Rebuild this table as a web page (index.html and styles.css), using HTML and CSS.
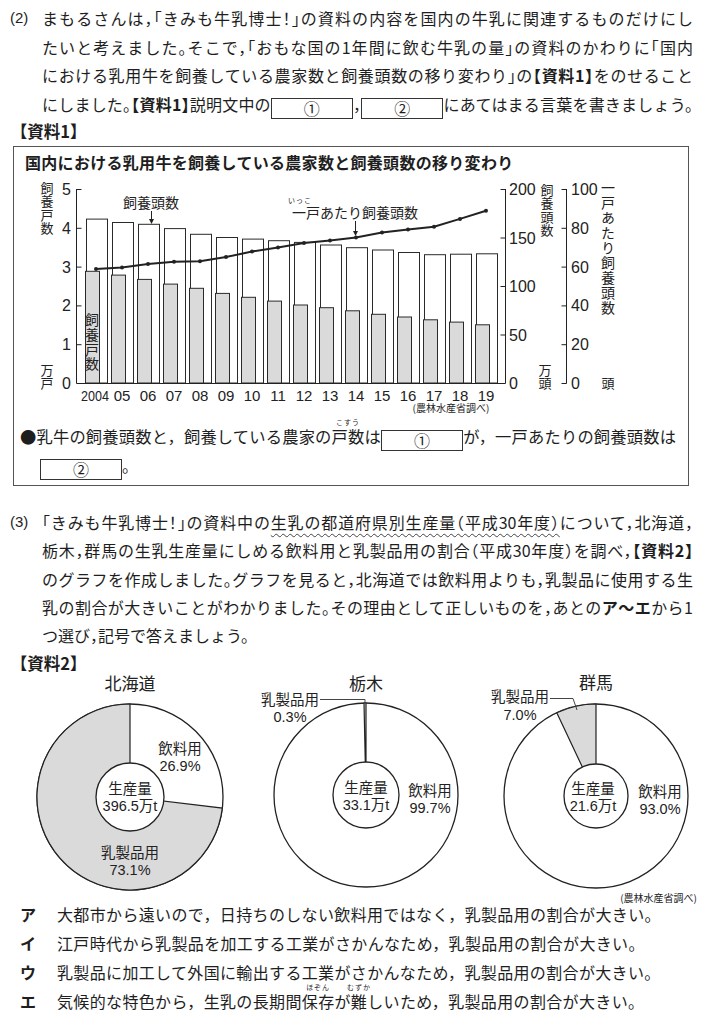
FILE: index.html
```html
<!DOCTYPE html>
<html lang="ja">
<head>
<meta charset="utf-8">
<title>資料</title>
<link rel="stylesheet" href="styles.css">
</head>
<body>
<div class="page">
  <section class="q">
    <div class="qnum">(2)</div>
    <div class="qbody">
      <p class="ln">まもるさんは，「きみも牛乳博士！」の資料の内容を国内の牛乳に関連するものだけにし</p>
      <p class="ln">たいと考えました。そこで，「おもな国の1年間に飲む牛乳の量」の資料のかわりに「国内</p>
      <p class="ln">における乳用牛を飼養している農家数と飼養頭数の移り変わり」の<b>【資料1】</b>をのせること</p>
      <p class="ln">にしました。<b>【資料1】</b>説明文中の<span class="blank">①</span>，<span class="blank">②</span>にあてはまる言葉を書きましょう。</p>
    </div>
  </section>
  <div class="tag">【資料1】</div>

  <div class="chartbox">
    <div class="ctitle">国内における乳用牛を飼養している農家数と飼養頭数の移り変わり</div>
    <svg class="chart" viewBox="14 177 674 244" width="674" height="244">
      <g class="wbar">
        <rect x="86.5" y="219.1" width="21" height="163.9"/>
        <rect x="112.5" y="222.5" width="21" height="160.5"/>
        <rect x="138.5" y="224.3" width="21" height="158.7"/>
        <rect x="164.5" y="228.6" width="21" height="154.4"/>
        <rect x="190.5" y="234.3" width="21" height="148.7"/>
        <rect x="216.5" y="237.5" width="21" height="145.5"/>
        <rect x="242.5" y="239.1" width="21" height="143.9"/>
        <rect x="268.5" y="240.7" width="21" height="142.3"/>
        <rect x="294.5" y="242.4" width="21" height="140.6"/>
        <rect x="320.5" y="245.0" width="21" height="138.0"/>
        <rect x="346.5" y="247.7" width="21" height="135.3"/>
        <rect x="372.5" y="250.0" width="21" height="133.0"/>
        <rect x="398.5" y="252.5" width="21" height="130.5"/>
        <rect x="424.5" y="254.7" width="21" height="128.3"/>
        <rect x="450.5" y="254.2" width="21" height="128.8"/>
        <rect x="476.5" y="253.8" width="21" height="129.2"/>
      </g>
      <g class="gbar">
        <rect x="85.5" y="271.3" width="14" height="111.7"/>
        <rect x="111.5" y="275.1" width="14" height="107.9"/>
        <rect x="137.5" y="279.4" width="14" height="103.6"/>
        <rect x="163.5" y="284.1" width="14" height="98.9"/>
        <rect x="189.5" y="288.3" width="14" height="94.7"/>
        <rect x="215.5" y="293.4" width="14" height="89.6"/>
        <rect x="241.5" y="297.3" width="14" height="85.7"/>
        <rect x="267.5" y="301.1" width="14" height="81.9"/>
        <rect x="293.5" y="305.0" width="14" height="78.0"/>
        <rect x="319.5" y="307.7" width="14" height="75.3"/>
        <rect x="345.5" y="310.8" width="14" height="72.2"/>
        <rect x="371.5" y="314.3" width="14" height="68.7"/>
        <rect x="397.5" y="317.0" width="14" height="66.0"/>
        <rect x="423.5" y="319.8" width="14" height="63.2"/>
        <rect x="449.5" y="322.1" width="14" height="60.9"/>
        <rect x="475.5" y="324.8" width="14" height="58.2"/>
      </g>
      <polyline class="trend" points="96,269.1 122,267.6 148,264.1 174,261.8 200,261.2 226,257.1 252,251.5 278,247.4 304,243.1 330,240.6 356,237.5 382,232.6 408,229.5 434,226.8 460,218.9 486,210.7"/>
      <g class="dots">
        <circle cx="96" cy="269.1" r="2"/><circle cx="122" cy="267.6" r="2"/><circle cx="148" cy="264.1" r="2"/><circle cx="174" cy="261.8" r="2"/>
        <circle cx="200" cy="261.2" r="2"/><circle cx="226" cy="257.1" r="2"/><circle cx="252" cy="251.5" r="2"/><circle cx="278" cy="247.4" r="2"/>
        <circle cx="304" cy="243.1" r="2"/><circle cx="330" cy="240.6" r="2"/><circle cx="356" cy="237.5" r="2"/><circle cx="382" cy="232.6" r="2"/>
        <circle cx="408" cy="229.5" r="2"/><circle cx="434" cy="226.8" r="2"/><circle cx="460" cy="218.9" r="2"/><circle cx="486" cy="210.7" r="2"/>
      </g>
      <g class="axis">
        <path d="M76.5 189V383.5H505.5V189"/>
        <path d="M76.5 189.5h5M76.5 228.3h5M76.5 267.1h5M76.5 305.9h5M76.5 344.7h5"/>
        <path d="M500.5 189.5h5M500.5 238h5M500.5 286.5h5M500.5 335h5"/>
        <path d="M566.5 189V383.5"/>
        <path d="M561.5 189.5h5M561.5 228.3h5M561.5 267.1h5M561.5 305.9h5M561.5 344.7h5M561.5 383.5h5"/>
      </g>
      <g class="num end">
        <text x="71" y="195">5</text><text x="71" y="234">4</text><text x="71" y="273">3</text>
        <text x="71" y="311">2</text><text x="71" y="350">1</text><text x="71" y="389">0</text>
      </g>
      <g class="num">
        <text x="509" y="195">200</text><text x="509" y="244">150</text><text x="509" y="292">100</text>
        <text x="509" y="341">50</text><text x="509" y="389">0</text>
        <text x="571" y="195">100</text><text x="571" y="234">80</text><text x="571" y="273">60</text>
        <text x="571" y="311">40</text><text x="571" y="350">20</text><text x="571" y="389">0</text>
      </g>
      <g class="yr">
        <text x="95" y="401" textLength="28" lengthAdjust="spacingAndGlyphs">2004</text>
        <text x="122" y="401">05</text><text x="148" y="401">06</text><text x="174" y="401">07</text>
        <text x="200" y="401">08</text><text x="226" y="401">09</text><text x="252" y="401">10</text>
        <text x="278" y="401">11</text><text x="304" y="401">12</text><text x="330" y="401">13</text>
        <text x="356" y="401">14</text><text x="382" y="401">15</text><text x="408" y="401">16</text>
        <text x="434" y="401">17</text><text x="460" y="401">18</text><text x="486" y="401">19</text>
      </g>
      <text class="vt s13" x="47" y="181.5">飼養戸数</text>
      <text class="vt s13" x="47" y="363.5">万戸</text>
      <text class="vt s13" x="547" y="183.5">飼養頭数</text>
      <text class="vt s13" x="545" y="363.5">万頭</text>
      <text class="vt s14" x="608" y="181">一戸あたり飼養頭数</text>
      <text class="unit" x="608" y="388">頭</text>
      <text class="vt s14b" x="92" y="313">飼養戸数</text>
      <text class="ann" x="151" y="208">飼養頭数</text>
      <path class="arr" d="M151.5 211V221"/>
      <path class="head" d="M149 219h5l-2.5 5z"/>
      <text class="ann2" x="292" y="218">一戸あたり飼養頭数</text>
      <text class="rtx" x="300" y="203">いっこ</text>
      <path class="arr" d="M355.5 221V233"/>
      <path class="head" d="M353 231h5l-2.5 5z"/>
      <text class="src" x="451" y="412">(農林水産省調べ)</text>
    </svg>
    <p class="bl">●乳牛の飼養頭数と，飼養している農家の<span class="rb">戸数<span class="rt">こすう</span></span>は<span class="blank">①</span>が，一戸あたりの飼養頭数は</p>
    <p class="bl2"><span class="blank">②</span>。</p>
  </div>

  <section class="q q3">
    <div class="qnum">(3)</div>
    <div class="qbody">
      <p class="ln">「きみも牛乳博士！」の資料中の<span class="wavy">生乳の都道府県別生産量（平成30年度）</span>について，北海道，</p>
      <p class="ln">栃木，群馬の生乳生産量にしめる飲料用と乳製品用の割合（平成30年度）を調べ，<b>【資料2】</b></p>
      <p class="ln">のグラフを作成しました。グラフを見ると，北海道では飲料用よりも，乳製品に使用する生</p>
      <p class="ln">乳の割合が大きいことがわかりました。その理由として正しいものを，あとの<b>ア～エ</b>から1</p>
      <p class="ln last">つ選び，記号で答えましょう。</p>
    </div>
  </section>
  <div class="tag tag2">【資料2】</div>

  <svg class="pies" viewBox="10 673 683 225" width="683" height="225">
    <text class="pt" x="130" y="688">北海道</text>
    <circle class="ring" cx="130" cy="795" r="93"/>
    <path class="slice" d="M130,795 L222.3,806.1 A93,93 0 1,1 130,702 Z"/>
    <circle class="core" cx="130" cy="795" r="34"/>
    <text class="pl" x="180" y="752">飲料用</text>
    <text class="pl" x="180" y="769">26.9%</text>
    <text class="pl" x="130" y="792">生産量</text>
    <text class="pl" x="130" y="809">396.5万t</text>
    <text class="pl" x="130" y="856">乳製品用</text>
    <text class="pl" x="130" y="873">73.1%</text>

    <text class="pt" x="366" y="688">栃木</text>
    <circle class="ring" cx="366" cy="793" r="92"/>
    <path class="slice" d="M366,793 L364,701 A92,92 0 0,1 366,701 Z"/>
    <circle class="core" cx="366" cy="793" r="33"/>
    <polyline class="lead" points="320,697.5 365,697.5 365,701"/>
    <text class="pl" x="290" y="703">乳製品用</text>
    <text class="pl" x="290" y="720">0.3%</text>
    <text class="pl" x="366" y="791">生産量</text>
    <text class="pl" x="366" y="808">33.1万t</text>
    <text class="pl" x="430" y="794">飲料用</text>
    <text class="pl" x="430" y="811">99.7%</text>

    <text class="pt" x="596" y="687">群馬</text>
    <circle class="ring" cx="596" cy="794" r="92"/>
    <path class="slice" d="M596,794 L556.8,710.8 A92,92 0 0,1 596,702 Z"/>
    <circle class="core" cx="596" cy="794" r="32"/>
    <polyline class="lead" points="550,696.5 573,696.5 577,708"/>
    <text class="pl" x="520" y="700">乳製品用</text>
    <text class="pl" x="520" y="718">7.0%</text>
    <text class="pl" x="593" y="792">生産量</text>
    <text class="pl" x="593" y="809">21.6万t</text>
    <text class="pl" x="660" y="795">飲料用</text>
    <text class="pl" x="660" y="812">93.0%</text>

    <text class="src2" x="697" y="900">(農林水産省調べ)</text>
  </svg>

  <ul class="opts">
    <li class="opt"><span class="ol">ア</span><span class="ot">大都市から遠いので，日持ちのしない飲料用ではなく，乳製品用の割合が大きい。</span></li>
    <li class="opt"><span class="ol">イ</span><span class="ot">江戸時代から乳製品を加工する工業がさかんなため，乳製品用の割合が大きい。</span></li>
    <li class="opt"><span class="ol">ウ</span><span class="ot">乳製品に加工して外国に輸出する工業がさかんなため，乳製品用の割合が大きい。</span></li>
    <li class="opt"><span class="ol">エ</span><span class="ot">気候的な特色から，生乳の長期間<span class="rb">保存<span class="rt">ほぞん</span></span>が<span class="rb">難<span class="rt">むずか</span></span>しいため，乳製品用の割合が大きい。</span></li>
  </ul>
</div>
</body>
</html>
```

FILE: styles.css
```css
html, body {
  margin: 0;
  background: #ffffff;
}

body {
  color: #1e1e1e;
  font-family: "Noto Sans CJK JP", "Noto Sans", sans-serif;
}

.page {
  width: 683px;
  padding: 4px 11px 0 10px;
  font-size: 16px;
}

.q {
  display: flex;
}

.qnum {
  flex: none;
  width: 32px;
  font-family: "Liberation Sans", sans-serif;
  font-size: 15px;
  line-height: 28.7px;
}

.qbody {
  flex: 1;
  min-width: 0;
}

.ln {
  margin: 0;
  line-height: 28.7px;
  text-align: justify;
  text-align-last: justify;
  font-feature-settings: "halt";
}

.ln.last {
  text-align-last: left;
}

.ln b,
.tag {
  font-weight: 700;
}

.tag {
  line-height: 24px;
  margin-left: 9px;
  font-size: 16.5px;
  font-feature-settings: "halt";
}

.blank {
  display: inline-block;
  box-sizing: border-box;
  width: 82px;
  height: 21px;
  border: 1px solid #333;
  line-height: 19px;
  text-align: center;
  text-align-last: center;
  vertical-align: -4px;
  font-size: 16px;
  font-feature-settings: normal;
}

.rb {
  position: relative;
}

.rt {
  position: absolute;
  left: 50%;
  top: -5px;
  transform: translateX(-50%);
  font-size: 7px;
  line-height: 1;
  letter-spacing: 1px;
  white-space: nowrap;
  font-weight: 400;
}

/* chart box */
.chartbox {
  box-sizing: border-box;
  width: 676px;
  margin: 3px 0 0 3px;
  border: 1px solid #555;
  padding: 0 0 5px;
}

.ctitle {
  font-size: 16px;
  font-weight: 700;
  letter-spacing: 0.3px;
  line-height: 30px;
  padding-left: 11px;
}

.chart {
  display: block;
  width: 674px;
  height: 244px;
  font-family: "Liberation Sans", "Noto Sans CJK JP", sans-serif;
}

.wbar rect {
  fill: #ffffff;
  stroke: #2a2a2a;
  stroke-width: 1;
}

.gbar rect {
  fill: #dadada;
  stroke: #2a2a2a;
  stroke-width: 1;
}

.trend {
  fill: none;
  stroke: #222;
  stroke-width: 2;
}

.dots circle {
  fill: #222;
}

.axis path {
  fill: none;
  stroke: #222;
  stroke-width: 1;
}

.num text {
  font-size: 16px;
  fill: #222;
}

.num.end text {
  text-anchor: end;
}

.yr text {
  font-size: 15px;
  text-anchor: middle;
  fill: #222;
}

.vt {
  font-family: "Noto Sans CJK JP", sans-serif;
  writing-mode: vertical-rl;
  text-orientation: upright;
  fill: #222;
}

.vt.s13 {
  font-size: 13px;
  letter-spacing: 0.4px;
}

.vt.s14 {
  font-size: 14px;
  letter-spacing: 1px;
}

.vt.s14b {
  font-size: 14px;
  letter-spacing: 0.6px;
}

.unit {
  font-family: "Noto Sans CJK JP", sans-serif;
  font-size: 13px;
  text-anchor: middle;
  fill: #222;
}

.ann {
  font-family: "Noto Sans CJK JP", sans-serif;
  font-size: 14px;
  text-anchor: middle;
  fill: #222;
}

.ann2 {
  font-family: "Noto Sans CJK JP", sans-serif;
  font-size: 14px;
  fill: #222;
}

.rtx {
  font-family: "Noto Sans CJK JP", sans-serif;
  font-size: 7px;
  letter-spacing: 1px;
  text-anchor: middle;
  fill: #222;
}

.arr {
  stroke: #222;
  stroke-width: 1;
}

.head {
  fill: #222;
}

.src {
  font-family: "Noto Sans CJK JP", sans-serif;
  font-size: 10px;
  text-anchor: middle;
  fill: #222;
}

.bl {
  margin: 1px 0 0;
  line-height: 28px;
  padding: 0 12px 0 6px;
  text-align: justify;
  text-align-last: justify;
  font-size: 16.3px;
}

.bl2 {
  margin: 0;
  line-height: 28px;
  padding-left: 26px;
}

/* question 3 */
.q3 {
  margin-top: 22px;
}

.q3 .ln,
.q3 .qnum {
  line-height: 28.3px;
}

.wavy {
  text-decoration: underline wavy #444;
  text-decoration-thickness: 1px;
  text-underline-offset: 4px;
}

.tag2 {
  margin-top: 1.5px;
}

/* pies */
.pies {
  display: block;
  width: 683px;
  height: 225px;
  overflow: visible;
  font-family: "Liberation Sans", "Noto Sans CJK JP", sans-serif;
}

.ring {
  fill: #ffffff;
  stroke: #222;
  stroke-width: 1.3;
}

.slice {
  fill: #dadada;
  stroke: #222;
  stroke-width: 1.2;
}

.core {
  fill: #ffffff;
  stroke: #222;
  stroke-width: 1.3;
}

.lead {
  fill: none;
  stroke: #444;
  stroke-width: 1;
}

.pt {
  font-family: "Noto Sans CJK JP", sans-serif;
  font-size: 17px;
  text-anchor: middle;
  fill: #222;
}

.pl {
  font-size: 14.5px;
  text-anchor: middle;
  fill: #222;
}

.src2 {
  font-family: "Noto Sans CJK JP", sans-serif;
  font-size: 10px;
  text-anchor: end;
  fill: #222;
}

/* options */
.opts {
  margin: 0;
  padding: 0;
  list-style: none;
}

.opt {
  display: flex;
  line-height: 29px;
  font-size: 16px;
}

.ol {
  flex: none;
  width: 37px;
  margin-left: 10px;
  font-weight: 700;
}

.ot {
  white-space: nowrap;
  letter-spacing: 0.35px;
}
```
